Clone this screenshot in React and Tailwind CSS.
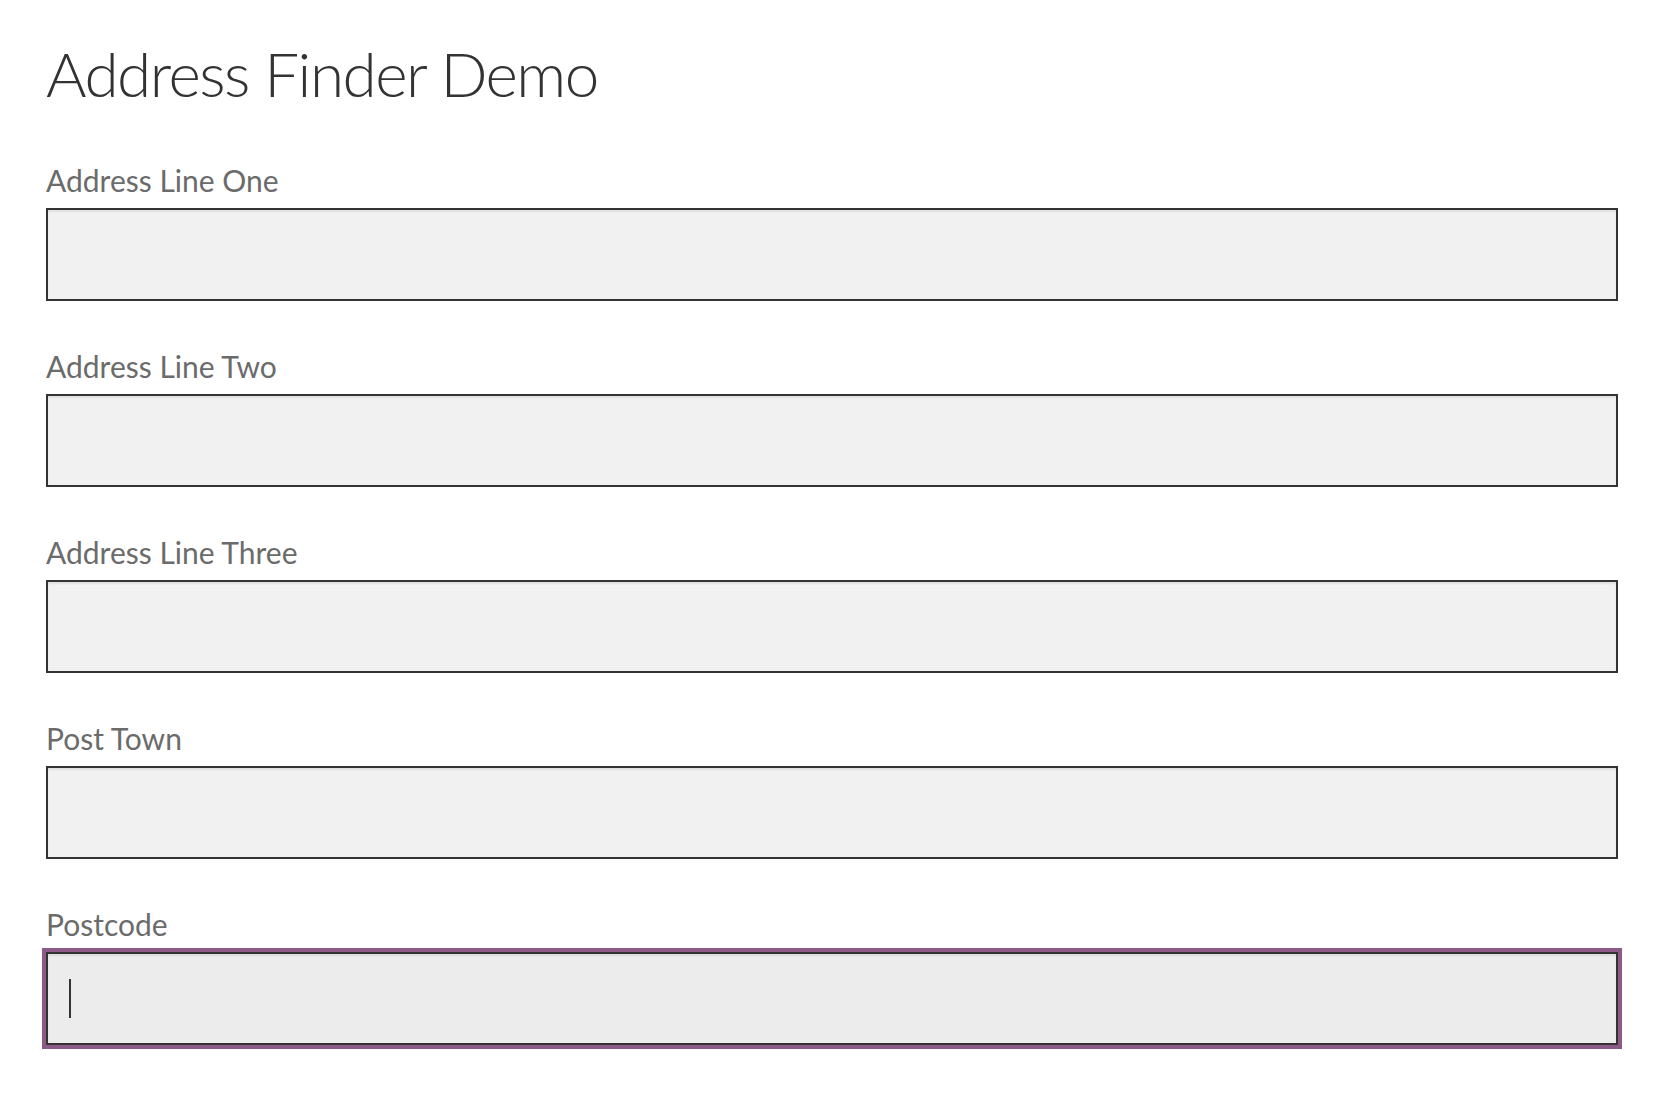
import React from 'react';

const fields = ['Address Line One', 'Address Line Two', 'Address Line Three', 'Post Town', 'Postcode'];

function Field({ label, focused }) {
  return (
    <div className="flex flex-col">
      <label className="text-[30px] leading-[40px] text-[#6b6b6b] font-normal h-[40px] mb-[8px]">{label}</label>
      {focused ? (
        <div className="relative h-[93px] border-2 border-[#333333] bg-[#ececec] outline-4 outline-[#8c5a86] shadow-[inset_0_2px_2px_rgba(0,0,0,0.07)]">
          <span className="absolute left-[21px] top-[25px] w-[2px] h-[39px] bg-[#333333]" />
        </div>
      ) : (
        <div className="h-[93px] border-2 border-[#333333] bg-[#f1f1f1] shadow-[inset_0_2px_2px_rgba(0,0,0,0.07)]" />
      )}
    </div>
  );
}

export default function App() {
  return (
    <div className="min-h-screen bg-white pl-[46px] pr-[50px] pt-[28px]" style={{ fontFamily: 'Lato, "Open Sans", sans-serif' }}>
      <h1 className="text-[62px] leading-[90px] font-light tracking-[-1.5px] text-[#333333] mb-[42px]">Address Finder Demo</h1>
      <div className="flex flex-col gap-[45px]">
        {fields.map((f, i) => (
          <Field key={f} label={f} focused={i === fields.length - 1} />
        ))}
      </div>
    </div>
  );
}
